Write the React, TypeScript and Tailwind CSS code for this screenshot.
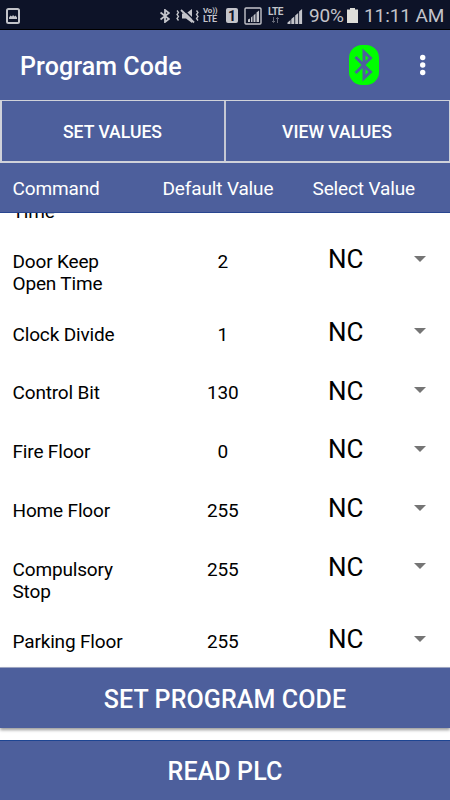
import { useState } from 'react'

const commands = [
  { name: ['Time'], value: '', height: 'h-[50.5px]' },
  { name: ['Door Keep', 'Open Time'], value: '2', height: 'h-[72.5px]' },
  { name: ['Clock Divide'], value: '1', height: 'h-[58.75px]' },
  { name: ['Control Bit'], value: '130', height: 'h-[58.75px]' },
  { name: ['Fire Floor'], value: '0', height: 'h-[58.75px]' },
  { name: ['Home Floor'], value: '255', height: 'h-[58.75px]' },
  { name: ['Compulsory', 'Stop'], value: '255', height: 'h-[72.5px]' },
  { name: ['Parking Floor'], value: '255', height: 'h-[58.75px]' },
]

function StatusBar() {
  return (
    <div className="h-[30px] shrink-0 bg-[#0d1328] border-b border-black flex items-center pl-[6px] pr-[6px] pt-[2px] text-[#c3c4ca]">
      <svg width="14" height="16" viewBox="0 0 14 16" fill="none">
        <rect x="1" y="1" width="12" height="14" rx="1.500" stroke="currentColor" strokeWidth="2" />
        <path d="M3 11V9.500L4.500 7.500L6 8.500L7 7L8.500 8.500L9.500 7.500L11 9.500V11Z" fill="currentColor" />
      </svg>
      <svg className="ml-auto shrink-0" width="10" height="14" viewBox="0 0 10 14" fill="none" stroke="currentColor" strokeWidth="1.800">
        <path d="M0.500 3.500L9 10L5 13V1L9 4L0.500 10.500" />
      </svg>
      <svg className="ml-[6px] shrink-0" width="23" height="16" viewBox="0 0 23 16" fill="none" stroke="currentColor">
        <path d="M6 5.500H10L16 1V15L10 10.500H6Z" fill="currentColor" stroke="none" />
        <path d="M7 1L20 14" stroke="#0d1328" strokeWidth="1.500" />
        <path d="M5 2L18 14.500" strokeWidth="1.800" />
        <path d="M1 2.500L2.500 4.500L1 6.500L2.500 8.500L1 10.500L2.500 12.500M20.500 2.500L22 4.500L20.500 6.500L22 8.500L20.500 10.500L22 12.500" strokeWidth="1.300" />
      </svg>
      <div className="ml-[4px] w-[17px] shrink-0 font-bold">
        <div className="text-[8px] leading-[8px] tracking-[-0.200px] whitespace-nowrap">Vo))</div>
        <div className="text-[9px] leading-[9px] tracking-[-0.200px]">LTE</div>
      </div>
      <div className="ml-[6px] w-[12px] h-[15px] shrink-0 rounded-[2px] bg-[#c3c4ca] text-[#0d1328] text-[14px] leading-[16px] font-bold text-center">1</div>
      <svg className="ml-[6px] shrink-0" width="18" height="18" viewBox="0 0 18 18" fill="currentColor">
        <rect x="1" y="1" width="16" height="16" rx="1" fill="none" stroke="currentColor" strokeWidth="1.400" />
        <path d="M4 12.500L6 11.500V15H4zM7 10.500L8.500 9V15H7zM9.500 8.500L11.500 6.500V15H9.500zM12.500 5.500L15 3.500V15H12.500z" />
      </svg>
      <div className="ml-[5px] w-[17px] h-[17px] shrink-0 flex flex-col items-center">
        <div className="text-[10px] leading-[9px] font-bold tracking-[-0.400px]">LTE</div>
        <svg className="mt-[1px]" width="9" height="6" viewBox="0 0 9 6" fill="none" stroke="#686b79">
          <path d="M2.500 0V5.500M1 4L2.500 5.500L4 4M6.500 6V0.500M5 2L6.500 0.500L8 2" />
        </svg>
      </div>
      <svg className="ml-[3px] shrink-0" width="16" height="16" viewBox="0 0 16 16" fill="currentColor">
        <path d="M0.500 14.500L3.500 12V16H0.500zM4.300 11L7.300 8.500V16H4.300zM8.200 7.500L11.200 5V16H8.200zM12.100 3.500L15.100 1V16H12.100z" />
      </svg>
      <span className="ml-[6px] w-[36px] shrink-0 text-[19px] leading-[22px] tracking-[-0.200px]">90%</span>
      <svg className="ml-[2px] shrink-0" width="11" height="15" viewBox="0 0 11 15">
        <path d="M3 0H8V1.500H11V15H0V1.500H3Z" fill="#deded9" />
      </svg>
      <span className="ml-[6px] w-[80px] shrink-0 text-[19px] leading-[22px] tracking-[-0.100px] whitespace-nowrap">11:11 AM</span>
    </div>
  )
}

function Toolbar() {
  return (
    <header className="h-[70px] shrink-0 flex items-center pl-5 pr-[24px] pt-[3px]">
      <h1 className="text-[25px] leading-[30px] font-medium tracking-[0.080px]">Program Code</h1>
      <button className="ml-auto w-[30px] h-[40px] rounded-[13px] bg-[#00ff00] -mt-[3px]" aria-label="Bluetooth">
        <svg width="30" height="40" viewBox="0 0 30 40" fill="none" stroke="#4d609d" strokeWidth="3">
          <path d="M6.500 12L21.500 27L15 33V7L21.500 13L6.500 28" />
        </svg>
      </button>
      <button className="ml-[41px] -mt-[3px]" aria-label="More options">
        <svg width="6" height="22" viewBox="0 0 6 22" fill="white">
          <circle cx="2.700" cy="3.500" r="2.700" />
          <circle cx="2.700" cy="11" r="2.700" />
          <circle cx="2.700" cy="18.500" r="2.700" />
        </svg>
      </button>
    </header>
  )
}

function App() {
  const [tab, setTab] = useState('set')

  return (
    <div className="w-[450px] h-[800px] flex flex-col overflow-hidden bg-[#4d5f9c] text-white font-[Roboto,sans-serif]">
      <StatusBar />
      <Toolbar />
      <div className="h-[63px] shrink-0 flex border-t border-l-2 border-r border-b-2 border-[#d0d2da] text-[17.600px] font-medium">
        <button className="w-[224px] pt-[2px] pr-[1px] border-r-2 border-[#c5c8d4]" aria-pressed={tab === 'set'} onClick={() => setTab('set')}>SET VALUES</button>
        <button className="flex-1 pt-[2px] pr-[1px]" aria-pressed={tab === 'view'} onClick={() => setTab('view')}>VIEW VALUES</button>
      </div>
      <div className="h-[50px] shrink-0 grid grid-cols-3 items-center pt-[3px] border-b border-[#294690] text-[19px] tracking-[-0.140px]">
        <span className="pl-[12.5px]">Command</span>
        <span className="pl-[12.5px]">Default Value</span>
        <span className="pl-[12.5px]">Select Value</span>
      </div>

      <div className="h-[454px] shrink-0 overflow-hidden bg-white text-black">
        <div className="-mt-[25px]">
          {commands.map((command) => (
            <div key={command.name[0]} className={`grid grid-cols-3 pt-[12.5px] text-[19px] leading-[22px] tracking-[-0.160px] ${command.height}`}>
              <div className="pl-[12.5px]">
                {command.name.map((line) => <div key={line}>{line}</div>)}
              </div>
              <div className="pl-[12.5px] pr-[17px] text-center">{command.value}</div>
              {command.value && (
                <div className="flex h-[22px] items-center justify-between pl-[28px] pr-[24px] -mt-[2.750px]">
                  <span className="text-[26px]">NC</span>
                  <svg className="-mt-[1px]" width="12" height="6" viewBox="0 0 12 6"><path d="M0 0H12L6 6Z" fill="#757575" /></svg>
                </div>
              )}
            </div>
          ))}
        </div>
      </div>

      <div className="h-[133px] shrink-0 bg-white flex flex-col justify-between text-[25px] font-medium tracking-[0.100px]">
        <button className="h-[61px] pt-[3px] border-t border-[#9da5c1] bg-[#4d5f9c] shadow-[0_2px_3px_rgba(0,0,0,0.4)]">SET PROGRAM CODE</button>
        <button className="h-[60px] pt-[2px] border-t border-[#1d4592] bg-[#4d5f9c]">READ PLC</button>
      </div>
    </div>
  )
}

export default App
